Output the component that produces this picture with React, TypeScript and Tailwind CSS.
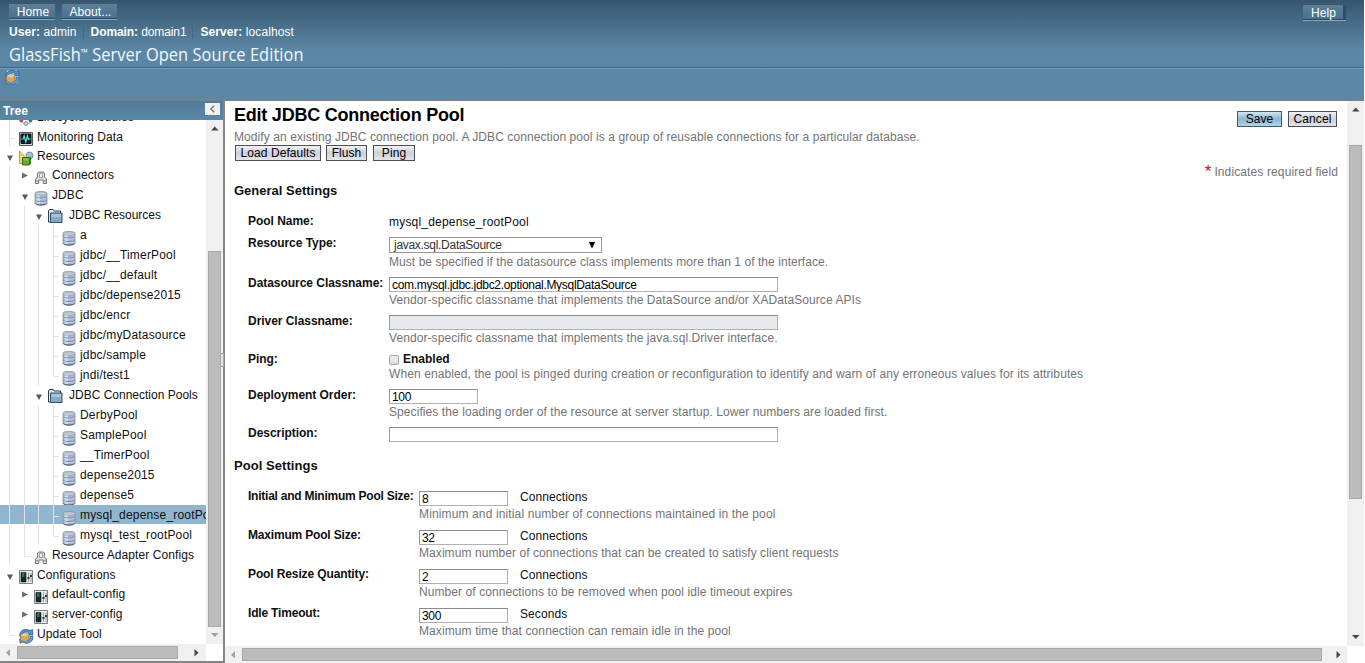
import React from "react";

type IconName = "db" | "folder" | "bridge" | "monitor" | "resources" | "config" | "update" | "lifecycle";

function Icon({ name, className = "" }: { name: IconName; className?: string }) {
  const cls = "block h-4 w-4 shrink-0 " + className;
  switch (name) {
    case "db":
      return (
        <svg viewBox="0 0 16 16" className={cls}>
          <path d="M2 3.500C2 2 4.500 1.500 8 1.500s6 .5 6 2v9.500c0 1.500-2.500 2.200-6 2.200s-6-.7-6-2.200z" fill="#a3b4d1" stroke="#868d99" strokeWidth=".8" />
          <path d="M3.500 4v9.600c1 .5 2 .8 3.500.8V5z" fill="#c9d7ec" />
          <ellipse cx="8" cy="3.600" rx="5.400" ry="1.700" fill="#c3ccd4" stroke="#a3abb5" strokeWidth=".6" />
          <path d="M2.300 7c1.500 1.500 9.900 1.500 11.400 0M2.300 10.500c1.500 1.500 9.900 1.500 11.400 0" fill="none" stroke="#6f7f9b" strokeWidth=".8" />
          <path d="M2.600 8c1.500 1.500 9.300 1.500 10.800 0M2.600 11.500c1.500 1.500 9.300 1.500 10.800 0" fill="none" stroke="#dae5f4" strokeWidth=".7" />
          <path d="M2.500 13.500c1.500 2 9.500 2 11 0" fill="none" stroke="#4b5260" strokeWidth=".9" />
        </svg>
      );
    case "folder":
      return (
        <svg viewBox="0 0 16 16" className={cls}>
          <path d="M1.500 14V3L2.500 1.500h3.700l1 1.500h6.300V14z" fill="#dfe8ef" stroke="#2c3945" />
          <path d="M3.500 5h11.500v9.500H3.500z" fill="#86a9c6" stroke="#35526b" />
          <path d="M4.500 6h9.500v3H4.500z" fill="#a9c3d9" />
        </svg>
      );
    case "bridge":
      return (
        <svg viewBox="0 0 16 16" className={cls}>
          <path d="M2.500 14.500V9.800L4.500 8.500V4L6 3h4l1.500 1v4.500l2 1.300v4.700h-3.200V11H5.700v3.500z" fill="#dcdee0" stroke="#73777d" />
          <path d="M6.500 4.500h3v4h-3z" fill="#f8f8f8" stroke="#8a8e94" strokeWidth=".8" />
          <path d="M3 12h2.500M10.500 12H13" fill="none" stroke="#85898f" />
        </svg>
      );
    case "monitor":
      return (
        <svg viewBox="0 0 16 16" className={cls}>
          <path d="M1.500 1.500h13v13h-13z" fill="#d6dadb" stroke="#555" />
          <path d="M3 3h10v9.500H3z" fill="#06252a" stroke="#101010" />
          <path d="M3.500 8H5l1.200-3L7.800 11l1.600-6 1 3.500L11.500 8h1" fill="none" stroke="#5fdcd8" strokeWidth="1.200" />
        </svg>
      );
    case "resources":
      return (
        <svg viewBox="0 0 16 16" className={cls}>
          <path d="M1.500 1v12.500h4V8h2.500z" fill="#f5d76b" stroke="#b08c33" strokeWidth=".8" />
          <circle cx="11.500" cy="5.500" r="3.500" fill="#a9bfd4" stroke="#66798d" strokeWidth=".8" />
          <path d="M4.500 7.500h7v7.500h-7z" fill="#62a92f" stroke="#356c12" />
          <path d="M11.500 7.500L13 6.300v7L11.500 15z" fill="#3f7d1b" />
          <path d="M5.500 8.500h5v2h-5z" fill="#85c653" />
        </svg>
      );
    case "config":
      return (
        <svg viewBox="0 0 16 16" className={cls}>
          <path d="M1.500 1.500h13v13h-13z" fill="#ecedf0" stroke="#7d7f83" />
          <path d="M3 3.500h5v9.500H3z" fill="#102b2f" stroke="#111" strokeWidth=".6" />
          <path d="M4 5h2.500M4 7h2.500" stroke="#5ea4a0" />
          <path d="M10.500 3.500V13M13 3.500V13" stroke="#888" strokeWidth=".8" />
          <path d="M9.500 8h2v2h-2zM12 6h2v2h-2z" fill="#333" />
        </svg>
      );
    case "update":
      return (
        <svg viewBox="0 0 16 16" className={cls}>
          <path d="M3 1.500h10.500L15 3v9l-2 2.500H6L2 15z" fill="#b9d9ef" />
          <path d="M1.500 8A6.500 6.500 0 0 1 12 2.800L14.500 1.500 15 7l-4.500-.8L11.500 5A4.500 4.500 0 0 0 4 8z" fill="#4d94cf" stroke="#245e96" strokeWidth=".7" />
          <path d="M15 8.500A6.500 6.500 0 0 1 4.500 14L2 15.200 1.500 11l9.500 1A4.500 4.500 0 0 0 12.500 8z" fill="#5fa3d8" stroke="#245e96" strokeWidth=".7" />
          <path d="M2.500 7l4-2.200 4.500 1.700v5L7 14 2.500 12z" fill="#d4a868" stroke="#99713a" strokeWidth=".7" />
          <path d="M2.700 7.100L7 8.600l3.800-2-4.300-1.600z" fill="#eed09c" />
        </svg>
      );
    case "lifecycle":
      return (
        <svg viewBox="0 0 16 16" className={cls}>
          <circle cx="8" cy="8" r="5" fill="none" stroke="#bbb" strokeWidth="1" />
          <circle cx="3.300" cy="9.500" r="1.900" fill="#b5474e" />
          <circle cx="12.500" cy="9.500" r="1.900" fill="#3f7f49" />
          <circle cx="8" cy="12.500" r="2" fill="#b7d5e8" stroke="#5c8199" strokeWidth=".7" />
        </svg>
      );
  }
}

const CELL_WIDTHS = ["w-[15px]", "w-[14px]", "w-[15px]", "w-[14px]"];

function Guide({ kind, level }: { kind: string; level: number }) {
  return (
    <svg viewBox="0 0 15 20" className={"block h-5 shrink-0 " + CELL_WIDTHS[level]} preserveAspectRatio="xMinYMin slice">
      {(kind === "|" || kind === "T") && <path d="M7.500 0v20" stroke="#e2e2e2" />}
      {kind === "L" && <path d="M7.500 0v11.500" stroke="#e2e2e2" />}
      {(kind === "T" || kind === "L") && <path d="M8 11.500h5" stroke="#e2e2e2" />}
      {kind === "v" && <path d="M5 9.500h6L8 15z" fill="#5a5a5a" />}
      {kind === ">" && <path d="M5 7.500v6l6-3z" fill="#6e6e6e" />}
    </svg>
  );
}

interface Row {
  g: string;
  icon: IconName;
  text: string;
  short?: boolean;
  selected?: boolean;
}

const ROWS: Row[] = [
  { g: "T", icon: "lifecycle", text: "Lifecycle Modules" },
  { g: "T", icon: "monitor", text: "Monitoring Data", short: true },
  { g: "v", icon: "resources", text: "Resources", short: true },
  { g: "|>", icon: "bridge", text: "Connectors" },
  { g: "|v", icon: "db", text: "JDBC" },
  { g: "||v", icon: "folder", text: "JDBC Resources" },
  { g: "|||T", icon: "db", text: "a" },
  { g: "|||T", icon: "db", text: "jdbc/__TimerPool" },
  { g: "|||T", icon: "db", text: "jdbc/__default" },
  { g: "|||T", icon: "db", text: "jdbc/depense2015" },
  { g: "|||T", icon: "db", text: "jdbc/encr" },
  { g: "|||T", icon: "db", text: "jdbc/myDatasource" },
  { g: "|||T", icon: "db", text: "jdbc/sample" },
  { g: "|||L", icon: "db", text: "jndi/test1" },
  { g: "||v", icon: "folder", text: "JDBC Connection Pools" },
  { g: "|||T", icon: "db", text: "DerbyPool" },
  { g: "|||T", icon: "db", text: "SamplePool" },
  { g: "|||T", icon: "db", text: "__TimerPool" },
  { g: "|||T", icon: "db", text: "depense2015" },
  { g: "|||T", icon: "db", text: "depense5" },
  { g: "|||T", icon: "db", text: "mysql_depense_rootPool", selected: true },
  { g: "|||L", icon: "db", text: "mysql_test_rootPool" },
  { g: "|L", icon: "bridge", text: "Resource Adapter Configs" },
  { g: "v", icon: "config", text: "Configurations", short: true },
  { g: "|>", icon: "config", text: "default-config" },
  { g: "|>", icon: "config", text: "server-config" },
  { g: "L", icon: "update", text: "Update Tool" },
];

const LABEL_GAPS = ["", "ml-[3px]", "ml-[3px]", "ml-[6px] tracking-[0px]", "ml-[3px] tracking-[0.18px]"];
const ICON_GAPS = ["", "ml-px", "ml-[2px]", "ml-px", "ml-px"];

function TreeRow({ row }: { row: Row }) {
  const depth = row.g.length;
  const iconTop = row.icon === "db" || (row.icon === "config" && depth === 2) ? "mt-[5px] " : row.icon === "folder" ? "mt-[3px] " : "mt-[4px] ";
  return (
    <div className={"flex shrink-0 pl-[2px] " + (row.short ? "h-[19px] " : "h-5 ") + (row.selected ? "border-b border-white bg-[#8fb5cf]" : "")}>
      {row.g.split("").map((k, i) => (
        <Guide key={i} kind={k} level={i} />
      ))}
      <Icon name={row.icon} className={iconTop + ICON_GAPS[depth]} />
      <span className={"leading-[20px] whitespace-nowrap text-[#101010] " + LABEL_GAPS[depth]}>{row.text}</span>
    </div>
  );
}

function Arrow({ dir, dim }: { dir: "up" | "down" | "left" | "right"; dim?: boolean }) {
  const d = { up: "M5 10.500h7.500L8.800 6.500z", down: "M5 6h7.500l-3.700 4z", left: "M10 5v7.500L6 8.800z", right: "M6.500 5v7.500l4-3.700z" }[dir];
  return (
    <svg viewBox="0 0 17 17" className="block h-[17px] w-[17px] shrink-0">
      <path d={d} fill={dim ? "#a0a0a0" : "#484848"} />
    </svg>
  );
}

function Tab({ children, className }: { children: React.ReactNode; className: string }) {
  return (
    <div className={"h-[15px] border-b border-[#264a66] bg-linear-to-b from-[#5d8099] to-[#48708f] text-center leading-[16px] text-white shadow-[0_1px_0_#85a9c2] " + className}>
      {children}
    </div>
  );
}

function Button({ children, className, primary }: { children: React.ReactNode; className: string; primary?: boolean }) {
  return (
    <button
      className={
        "block h-4 border text-center leading-[14px] text-black " +
        (primary
          ? "border-[#3c5b74] bg-linear-to-b from-[#d4e6f1] via-[#8cb6d0] to-[#b4d4e6] "
          : "border-[#4d4f54] bg-linear-to-b from-[#f2f2f5] via-[#cfd0d8] to-[#e4e4ea] ") +
        className
      }
    >
      {children}
    </button>
  );
}

function Input({ value = "", className, disabled }: { value?: string; className: string; disabled?: boolean }) {
  return (
    <input
      defaultValue={value}
      disabled={disabled}
      className={"block h-[15px] border border-t-[#8a8a8a] border-r-[#b0b0b0] border-b-[#b0b0b0] border-l-[#9a9a9a] pt-px pr-[3px] pl-[2px] text-[12px] leading-[12px] tracking-[-0.3px] text-black " + (disabled ? "bg-[#e6eaef] " : "bg-white ") + className}
    />
  );
}

function Field({ label, className, children }: { label: string; className: string; children: React.ReactNode }) {
  return (
    <div className={"flex " + className}>
      <div className="w-[141px] shrink-0 leading-[20px] font-bold tracking-[-0.04px] whitespace-nowrap text-[#101010]">{label}</div>
      <div className="whitespace-nowrap">{children}</div>
    </div>
  );
}

function Hint({ children, className = "mt-px" }: { children: React.ReactNode; className?: string }) {
  return <div className={"leading-[14px] text-[#737373] " + className}>{children}</div>;
}

const POOL = [
  { label: "Initial and Minimum Pool Size:", value: "8", unit: "Connections", hint: "Minimum and initial number of connections maintained in the pool", labelClass: "tracking-[-0.24px]", hintClass: "mt-px tracking-[0.13px]" },
  { label: "Maximum Pool Size:", value: "32", unit: "Connections", hint: "Maximum number of connections that can be created to satisfy client requests", labelClass: "tracking-[-0.18px]", hintClass: "mt-px tracking-[0.07px]" },
  { label: "Pool Resize Quantity:", value: "2", unit: "Connections", hint: "Number of connections to be removed when pool idle timeout expires", labelClass: "tracking-[-0.12px]", hintClass: "mt-px" },
  { label: "Idle Timeout:", value: "300", unit: "Seconds", hint: "Maximum time that connection can remain idle in the pool", labelClass: "tracking-[-0.18px]", hintClass: "mt-px tracking-[0.1px]" },
];

export default function App() {
  return (
    <div className="flex h-[663px] w-[1365px] flex-col overflow-hidden bg-white pr-px font-['Liberation_Sans',Arial,sans-serif] text-[12px] tracking-[0.08px]">
      <header className="h-[101px] shrink-0 border-b-2 border-[#77828a] bg-[#5b87a6]">
        <div className="flex h-[67px] justify-between bg-linear-to-b from-[#38566e] to-[#5b87a6] to-75% pt-1 pr-[18px] pl-[9px]">
          <div>
            <div className="flex gap-[7px]">
              <Tab className="w-[46px] pl-[2px]">Home</Tab>
              <Tab className="w-[55px] pl-[2px]">About...</Tab>
            </div>
            <div className="mt-[6px] flex h-[14px] leading-[14px] text-white">
              <div><b>User:</b> admin</div>
              <div className="ml-[6px] border-l border-[#416783] pl-[7px] tracking-[-0.1px]"><b>Domain:</b> domain1</div>
              <div className="ml-[6px] border-l border-[#416783] pl-[7px]"><b>Server:</b> localhost</div>
            </div>
            <div className="mt-[3px] origin-left scale-x-[0.91] font-['Open_Sans',sans-serif] text-[18px] leading-[24px] font-medium tracking-[0.08px] whitespace-nowrap text-[#f2f7fa]">
              GlassFish<span className="align-[5px] text-[10px] leading-none">™</span> Server Open Source Edition
            </div>
          </div>
          <Tab className="mt-px w-[43px] border-r-[3px] border-r-[#344a66] pl-px">Help</Tab>
        </div>
        <div className="h-[32px] border-t border-[#3d6480] pt-px pl-[4px] shadow-[inset_0_1px_0_#7ba0ba]">
          <Icon name="update" />
        </div>
      </header>

      <div className="flex min-h-0 flex-1">
        <aside className="flex w-[225px] shrink-0 flex-col border-r-2 border-b-2 border-[#858585]">
          <div className="flex h-[19px] shrink-0 justify-between bg-linear-to-b from-[#517b99] to-[#5b87a6] pr-[3px] pl-[3px]">
            <b className="leading-[20px] text-white">Tree</b>
            <div className="mt-[2px] flex h-[12px] w-[15px] items-center justify-center bg-[#f0f0f0]">
              <svg viewBox="0 0 8 10" className="h-[8px] w-[7px]"><path d="M6 1L2 5l4 4" fill="none" stroke="#777" strokeWidth="1.700" /></svg>
            </div>
          </div>
          <div className="flex min-h-0 flex-1">
            <div className="w-[206px] overflow-hidden">
              <div className="-mt-[13px] flex flex-col">
                {ROWS.map((r, i) => <TreeRow key={i} row={r} />)}
              </div>
            </div>
            <div className="relative flex w-[17px] flex-col bg-[#f0f0f0]">
              <Arrow dir="up" />
              <div className="mt-[114px] ml-[2px] h-[376px] w-[13px] border border-[#a8a8a8] bg-[#bcbcbc]" />
              <Arrow dir="down" dim />
              <div className="absolute top-[233px] left-[14px] h-[14px] w-[4px] border border-[#aaa] bg-[#e8e8e8]" />
            </div>
          </div>
          <div className="flex h-[17px] w-[206px] shrink-0 bg-[#f0f0f0]">
            <Arrow dir="left" dim />
            <div className="mt-[2px] h-[13px] w-[161px] border border-[#a8a8a8] bg-[#bcbcbc]" />
            <div className="ml-[10px]"><Arrow dir="right" /></div>
          </div>
        </aside>

        <div className="flex min-w-0 flex-1 flex-col">
          <div className="flex min-h-0 flex-1">
            <main className="w-[1122px] overflow-hidden pl-[9px]">
              <div className="flex h-[63px] justify-between pr-[10px]">
                <div>
                  <h1 className="mt-[3px] text-[18px] leading-[22px] font-bold tracking-[-0.23px] text-black">Edit JDBC Connection Pool</h1>
                  <p className="mt-[3px] leading-[16px] text-[#737373]">
                    Modify an existing JDBC connection pool. A JDBC connection pool is a group of reusable connections for a particular database.
                  </p>
                  <div className="flex pl-px">
                    <Button className="w-[86px]">Load Defaults</Button>
                    <Button className="ml-[5px] w-[41px]">Flush</Button>
                    <Button className="ml-[6px] w-[42px]">Ping</Button>
                  </div>
                </div>
                <div className="flex gap-[6px] pt-[10px]">
                  <Button primary className="w-[45px]">Save</Button>
                  <Button className="w-[49px]">Cancel</Button>
                </div>
              </div>
              <div className="flex h-[17px] justify-end pr-[9px] leading-[17px] text-[#737373]">
                <span className="mr-[3px] text-[17px] leading-[16px] text-[#b01217]">*</span>
                <span className="tracking-[0.12px]">Indicates required field</span>
              </div>
              <h2 className="text-[13px] leading-[20px] font-bold tracking-[0px] text-[#101010]">General Settings</h2>
              <div className="pt-[10px] pl-[14px]">
                <Field label="Pool Name:" className="h-[22px]"><div className="leading-[22px] tracking-[0.2px] text-[#101010]">mysql_depense_rootPool</div></Field>
                <Field label="Resource Type:" className="h-[40px]">
                  <div className="mt-[4px] flex h-4 w-[213px] items-center justify-between border border-[#999] pr-[5px] pl-[4px] leading-[14px] tracking-[-0.29px] text-[#333]">
                    <span>javax.sql.DataSource</span>
                    <svg viewBox="0 0 8 8" className="h-[8px] w-[8px]"><path d="M.8 1h6.400L4 7.500z" fill="#000" /></svg>
                  </div>
                  <Hint className="mt-[2px] tracking-[0.06px]">Must be specified if the datasource class implements more than 1 of the interface.</Hint>
                </Field>
                <Field label="Datasource Classname:" className="h-[38px]">
                  <Input className="mt-[4px] w-[389px]" value="com.mysql.jdbc.jdbc2.optional.MysqlDataSource" />
                  <Hint>Vendor-specific classname that implements the DataSource and/or XADataSource APIs</Hint>
                </Field>
                <Field label="Driver Classname:" className="h-[38px]">
                  <Input disabled className="mt-[4px] w-[389px]" />
                  <Hint>Vendor-specific classname that implements the java.sql.Driver interface.</Hint>
                </Field>
                <Field label="Ping:" className="h-[36px]">
                  <div className="flex h-[18px]">
                    <div className="mt-[6px] h-[10px] w-[10px] rounded-[2px] border border-[#a6a6a6] bg-linear-to-b from-[#eee] to-[#ddd]" />
                    <b className="ml-[4px] leading-[20px] tracking-[0px] text-[#101010]">Enabled</b>
                  </div>
                  <Hint className="tracking-[0.095px]">When enabled, the pool is pinged during creation or reconfiguration to identify and warn of any erroneous values for its attributes</Hint>
                </Field>
                <Field label="Deployment Order:" className="h-[38px]">
                  <Input className="mt-[4px] w-[89px]" value="100" />
                  <Hint>Specifies the loading order of the resource at server startup. Lower numbers are loaded first.</Hint>
                </Field>
                <Field label="Description:" className="h-[33px]">
                  <Input className="mt-[4px] w-[389px]" />
                </Field>
              </div>
              <h2 className="h-[30px] text-[13px] leading-[20px] font-bold tracking-[0.05px] text-[#101010]">Pool Settings</h2>
              <div className="pl-[14px]">
                {POOL.map((p) => (
                  <div key={p.label} className="flex h-[39px] whitespace-nowrap">
                    <div className={"w-[171px] shrink-0 leading-[20px] font-bold text-[#101010] " + p.labelClass}>{p.label}</div>
                    <div>
                      <div className="flex h-[20px]">
                        <Input className="mt-[5px] w-[89px]" value={p.value} />
                        <span className="ml-[12px] leading-[22px] text-[#101010]">{p.unit}</span>
                      </div>
                      <Hint className={p.hintClass}>{p.hint}</Hint>
                    </div>
                  </div>
                ))}
              </div>
            </main>
            <div className="flex w-[17px] shrink-0 flex-col bg-[#f0f0f0]">
              <Arrow dir="up" />
              <div className="mt-[27px] ml-[2px] h-[354px] w-[13px] border border-[#a8a8a8] bg-[#bcbcbc]" />
              <div className="mt-auto"><Arrow dir="down" /></div>
            </div>
          </div>
          <div className="flex h-[17px] w-[1122px] shrink-0 bg-[#f0f0f0]">
            <Arrow dir="left" dim />
            <div className="mt-[2px] h-[13px] w-[1080px] border border-[#a8a8a8] bg-[#bcbcbc]" />
            <div className="ml-auto"><Arrow dir="right" /></div>
          </div>
        </div>
      </div>
    </div>
  );
}
